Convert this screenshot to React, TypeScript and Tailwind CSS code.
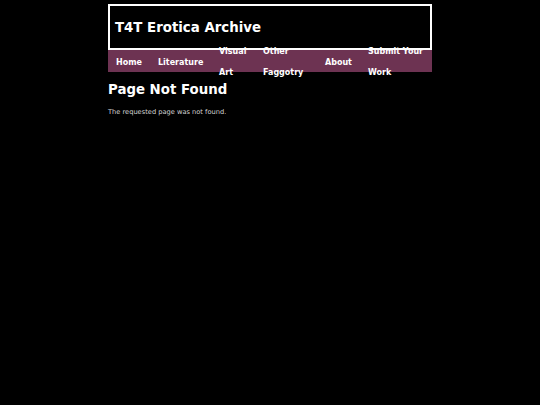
const navItems = [
  { label: 'Home', width: 'w-[42px]' },
  { label: 'Literature', width: 'w-[61px]' },
  { label: 'Visual Art', width: 'w-[44px]' },
  { label: 'Other Faggotry', width: 'w-[62px]' },
  { label: 'About', width: 'w-[43px]' },
  { label: 'Submit Your Work', width: 'w-[72px]' },
];

export default function App() {
  return (
    <div className="min-h-[405px] bg-black text-white font-['DejaVu_Sans',sans-serif]">
      <div className="w-[324px] mx-auto pt-[4px]">
        {/* header */}
        <header className="h-[46px] border-2 border-white flex items-center px-[5px] pt-[2px]">
          <h1 className="text-[13.33px] font-bold leading-none">T4T Erotica Archive</h1>
        </header>

        {/* nav */}
        <nav className="h-[22px] bg-[#6d3352] flex items-center">
          {navItems.map((item) => (
            <a
              key={item.label}
              href="#"
              className={`${item.width} shrink-0 pl-[8px] pr-[4px] pt-[2px] text-[8px] font-bold leading-[21px] text-white`}
            >
              {item.label}
            </a>
          ))}
        </nav>

        <main className="pt-[10px]">
          <h2 className="text-[13.33px] font-bold leading-[16px]">Page Not Found</h2>
          <p className="mt-[10px] text-[6.67px] leading-[8px] text-[#d4d4d4]">
            The requested page was not found.
          </p>
        </main>
      </div>
    </div>
  );
}
